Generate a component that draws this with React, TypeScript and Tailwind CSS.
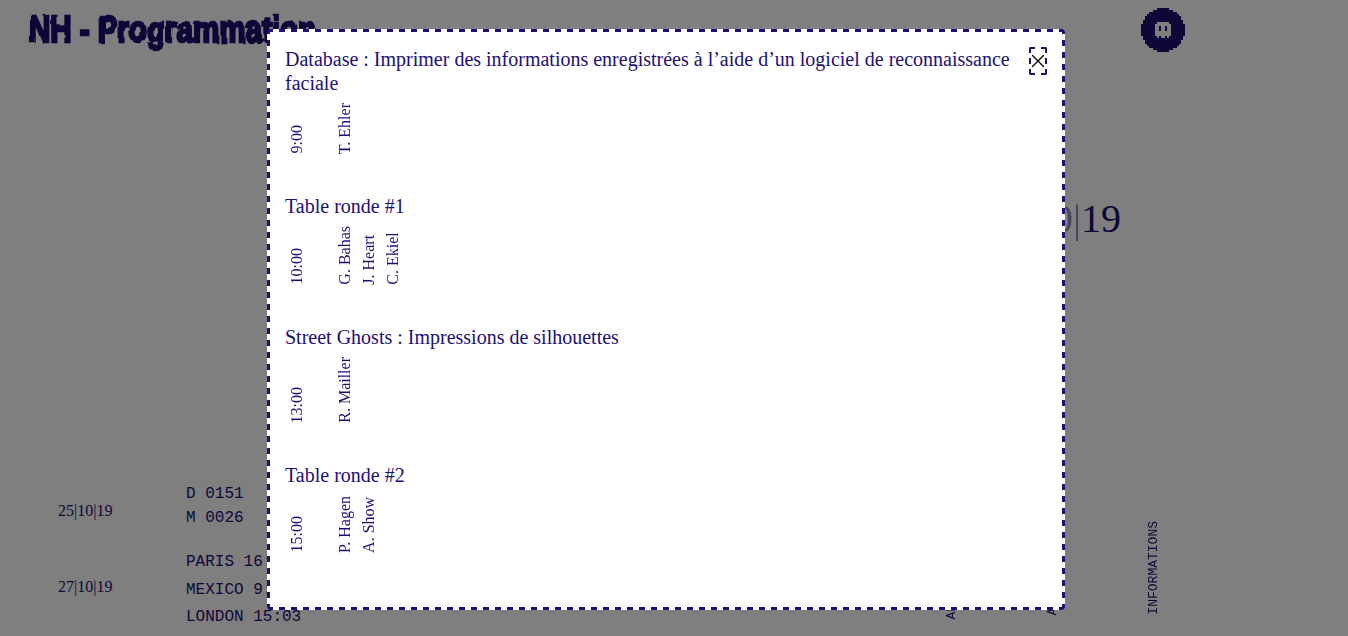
import React from 'react';
import { X } from 'lucide-react';

const sessions = [
  { title: 'Database : Imprimer des informations enregistrées à l’aide d’un logiciel de reconnaissance faciale', time: '9:00', people: ['T. Ehler'], top: '', row: 'mt-[7.5px]' },
  { title: 'Table ronde #1', time: '10:00', people: ['G. Bahas', 'J. Heart', 'C. Ekiel'], top: 'mt-[40.5px]', row: 'mt-[7.5px]' },
  { title: 'Street Ghosts : Impressions de silhouettes', time: '13:00', people: ['R. Mailler'], top: 'mt-[40.5px]', row: 'mt-[8.5px]' },
  { title: 'Table ronde #2', time: '15:00', people: ['P. Hagen', 'A. Show'], top: 'mt-[39.5px]', row: 'mt-[9px]' },
];

const Vertical = ({ children, className = '' }: { children: React.ReactNode; className?: string }) => (
  <span className={`[writing-mode:vertical-rl] rotate-180 whitespace-nowrap leading-[24px] ${className}`}>{children}</span>
);

const Skull = () => (
  <svg width="44" height="44" viewBox="0 0 44 44" shapeRendering="crispEdges">
    <path fill="#1c1070" fillRule="evenodd" d="M16 0h12v2h4v2h4v2h2v2h2v4h2v4h2v12h-2v4h-2v4h-2v2h-2v2h-4v2h-4v2H16v-2h-4v-2H8v-2H6v-2H4v-4H2v-4H0V16h2v-4h2V8h2V6h2V4h4V2h4zM16 14v2h-2v12h2v2h2v-2h2v2h4v-2h2v2h2v-2h2V16h-2v-2z" />
    <path fill="#1c1070" d="M18 18h2v5h-2zM24 18h2v5h-2z" />
  </svg>
);

export default function App() {
  return (
    <div className="relative h-[636px] w-[1348px] overflow-hidden bg-white font-['Liberation_Serif',serif] text-[#1c1070]">
      <svg className="absolute h-0 w-0">
        <filter id="rough">
          <feTurbulence type="fractalNoise" baseFrequency="0.05" numOctaves="2" seed="7" />
          <feDisplacementMap in="SourceGraphic" scale="4" />
        </filter>
      </svg>

      <header className="flex items-start pl-[29px] pr-[163px] pt-[9px]">
        <h1 className="origin-top-left scale-x-[0.82] whitespace-nowrap font-['Liberation_Sans',sans-serif] text-[36px] font-bold leading-[42px] [-webkit-text-stroke:2.5px_#1c1070] [filter:url(#rough)]">
          NH - Programmation
        </h1>
        <div className="ml-auto -mt-px">
          <Skull />
        </div>
      </header>

      <div className="mt-[144px] pr-[227px] text-right text-[40px] leading-[46px]">
        <span className="opacity-50">25|10</span>
        <span className="opacity-50">|</span>19
      </div>

      <div className="mt-[240px] grid grid-cols-[128px_1fr_auto] pl-[58px] pr-[182px] font-['Liberation_Mono',monospace] text-[16px]">
        <div className="flex flex-col font-['Liberation_Serif',serif]">
          <span className="mt-[17px] leading-[24px]">25|10|19</span>
          <span className="mt-[52px] leading-[24px]">27|10|19</span>
        </div>
        <div className="flex flex-col">
          <div className="leading-[24px]">D 0151</div>
          <div className="leading-[24px]">M 0026</div>
          <div className="mt-[19px] leading-[27.5px]">PARIS 16:03</div>
          <div className="leading-[27.5px]">MEXICO 9:03</div>
          <div className="leading-[27.5px]">LONDON 15:03</div>
        </div>
        <nav className="flex items-start text-[13px]">
          <div className="w-[101px] pt-[75px]">
            <Vertical className="leading-[14px]">ARCHIVES</Vertical>
          </div>
          <div className="w-[101px] pt-[71px]">
            <Vertical className="leading-[14px]">ARTISTES</Vertical>
          </div>
          <div className="pt-[39px]">
            <Vertical className="leading-[14px]">INFORMATIONS</Vertical>
          </div>
        </nav>
      </div>

      <div className="absolute inset-0 flex items-start justify-center bg-black/50 pr-[16px] pt-[29px]">
        {/* border drawn with gradients: the browser's own dashed border comes out too dense here */}
        <div className="h-[581px] w-[798px] rounded-[4px] px-[18px] pt-[18px] text-[#1d1075] [background:repeating-linear-gradient(90deg,#1d1075_0_6px,transparent_6px_12px)_top/100%_3px_no-repeat,repeating-linear-gradient(90deg,#1d1075_0_6px,transparent_6px_12px)_bottom/100%_3px_no-repeat,repeating-linear-gradient(0deg,#1d1075_0_6px,transparent_6px_12px)_left/3px_100%_no-repeat,repeating-linear-gradient(0deg,#1d1075_0_6px,transparent_6px_12px)_right/3px_100%_no-repeat,white]">
          <button className="float-right flex h-[28px] w-[18px] items-center justify-center rounded-[2px] border-2 border-dashed border-[#1d1075] text-black">
            <X size={22} strokeWidth={1.4} className="shrink-0" />
          </button>
          {sessions.map((s) => (
            <section key={s.time} className={s.top}>
              <h2 className="pr-[36px] text-[20px] font-normal leading-[24px]">{s.title}</h2>
              <div className={`flex items-end text-[16px] ${s.row}`}>
                <div className="flex w-[48px] justify-start">
                  <Vertical>{s.time}</Vertical>
                </div>
                <div className="flex">
                  {s.people.map((p) => (
                    <Vertical key={p}>{p}</Vertical>
                  ))}
                </div>
              </div>
            </section>
          ))}
        </div>
      </div>
    </div>
  );
}
